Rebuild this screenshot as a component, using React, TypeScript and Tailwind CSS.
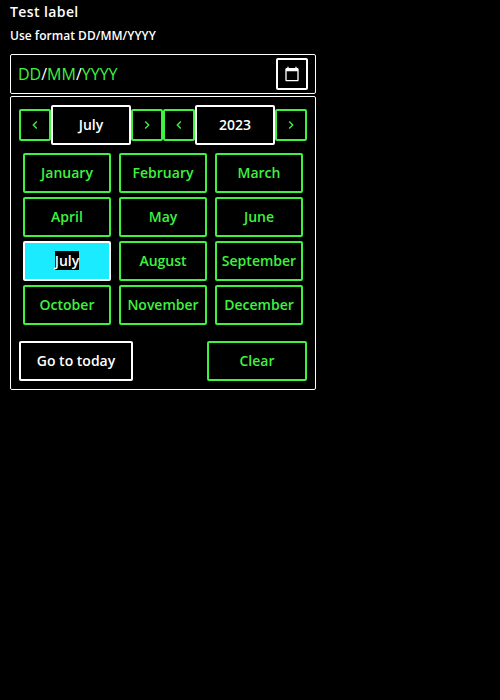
import React from 'react';

const MONTHS = [
  'January', 'February', 'March', 'April', 'May', 'June',
  'July', 'August', 'September', 'October', 'November', 'December',
];

function Icon({ d }: { d: string }) {
  return (
    <svg viewBox="0 0 24 24" className="h-4 w-4 fill-current" aria-hidden="true">
      <path d={d} />
    </svg>
  );
}

const LEFT = 'M15.41 7.41 14 6l-6 6 6 6 1.41-1.41L10.83 12z';
const RIGHT = 'M10 6 8.59 7.41 13.17 12l-4.58 4.59L10 18l6-6z';
const CALENDAR =
  'M20 3h-1V1h-2v2H7V1H5v2H4c-1.1 0-2 .9-2 2v16c0 1.1.9 2 2 2h16c1.1 0 2-.9 2-2V5c0-1.1-.9-2-2-2zm0 18H4V8h16v13z';

function NavButton({ d, label }: { d: string; label: string }) {
  return (
    <button
      aria-label={label}
      className="flex h-8 w-8 items-center justify-center rounded-[2px] border-2 border-[#3ff23f] text-[#3ff23f]"
    >
      <Icon d={d} />
    </button>
  );
}

function Stepper({ value, name }: { value: string; name: string }) {
  return (
    <div className="flex items-center">
      <NavButton d={LEFT} label={`Previous ${name}`} />
      <button className="h-10 w-20 rounded-[2px] border-2 border-white">{value}</button>
      <NavButton d={RIGHT} label={`Next ${name}`} />
    </div>
  );
}

export default function App() {
  return (
    <div className="min-h-screen bg-black px-[10px] font-['Open_Sans',sans-serif] text-sm font-semibold text-white">
      <div className="h-6 leading-6 tracking-[0.4px]">Test label</div>
      <div className="h-[30px] pt-[3px] text-xs leading-[18px] tracking-[0.02px]">Use format DD/MM/YYYY</div>

      <div className="flex h-10 w-[306px] items-center justify-between rounded-[2px] border border-white px-[7px]">
        <div className="text-base font-normal text-[#3ff23f]">
          DD<span className="text-white">/</span>MM<span className="text-white">/</span>YYYY
        </div>
        <button
          aria-label="Open calendar"
          className="flex h-8 w-8 items-center justify-center rounded-[2px] border-2 border-white"
        >
          <Icon d={CALENDAR} />
        </button>
      </div>

      <div className="mt-0.5 h-[294px] w-[306px] rounded-[2px] border border-white p-2">
        <div className="flex">
          <Stepper value="July" name="month" />
          <Stepper value="2023" name="year" />
        </div>

        <div className="mt-2 grid grid-cols-3 gap-x-2 gap-y-1 px-1">
          {MONTHS.map((month) =>
            month === 'July' ? (
              <button key={month} className="h-10 rounded-[2px] border-2 border-white bg-[#1aebff]">
                <span className="bg-black">{month}</span>
              </button>
            ) : (
              <button key={month} className="h-10 rounded-[2px] border-2 border-[#3ff23f] text-[#3ff23f]">
                {month}
              </button>
            ),
          )}
        </div>

        <div className="mt-4 flex justify-between">
          <button className="h-10 w-[114px] rounded-[2px] border-2 border-white">Go to today</button>
          <button className="h-10 w-[100px] rounded-[2px] border-2 border-[#3ff23f] text-[#3ff23f]">Clear</button>
        </div>
      </div>
    </div>
  );
}
